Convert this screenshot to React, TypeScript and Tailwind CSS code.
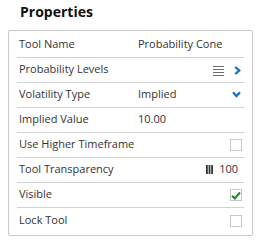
import React from "react";

const font = { fontFamily: "'Open Sans', 'Liberation Sans', sans-serif" };

function Label({ children }: { children: React.ReactNode }) {
  return <span className="w-[119px] shrink-0 pb-[3px] text-[11px] leading-[15px] text-[#333333] whitespace-nowrap">{children}</span>;
}

function Value({ children }: { children: React.ReactNode }) {
  return <span className="pb-[3px] text-[11px] leading-[15px] text-[#333333] whitespace-nowrap">{children}</span>;
}

function Row({ children, last }: { children: React.ReactNode; last?: boolean }) {
  return (
    <div className={`flex items-center h-[25px] pl-[2px] pr-[2px] ${last ? "" : "border-b border-[#d2d2d2]"}`}>
      {children}
    </div>
  );
}

function Checkbox({ checked }: { checked?: boolean }) {
  return (
    <span className="ml-auto flex items-center justify-center w-[12px] h-[12px] border border-[#c8c8c8] bg-white">
      {checked && (
        <svg width="10" height="9" viewBox="0 0 10 9">
          <path d="M1 4.8 L3.8 7.4 L9 1.6" fill="none" stroke="#218a21" strokeWidth="2.2" strokeLinejoin="miter" />
        </svg>
      )}
    </span>
  );
}

export default function App() {
  return (
    <div className="w-[261px] h-[243px] bg-white overflow-hidden" style={font}>
      <div className="pt-[2px] pl-[20px] text-[14px] leading-[19px] font-bold text-[#111111]">Properties</div>
      <div className="mt-[9px] ml-[8px] w-[245px] border border-[#c8c8c8] rounded-[2px] px-[8px] pt-[2px] pb-[2px]">
        <Row>
          <Label>Tool Name</Label>
          <Value>Probability Cone</Value>
        </Row>
        <Row>
          <Label>Probability Levels</Label>
          <span className="ml-auto flex items-center gap-[10px]">
            <svg width="11" height="10" viewBox="0 0 11 10" className="mt-[1px]">
              <rect x="0" y="0" width="11" height="1" fill="#6b6b6b" />
              <rect x="0" y="3" width="11" height="1" fill="#6b6b6b" />
              <rect x="0" y="6" width="11" height="1" fill="#6b6b6b" />
              <rect x="0" y="9" width="11" height="1" fill="#6b6b6b" />
            </svg>
            <svg width="7" height="9" viewBox="0 0 7 9" className="mr-[1px]">
              <path d="M1.2 1 L5.2 4.5 L1.2 8" fill="none" stroke="#1a6fc4" strokeWidth="2.3" />
            </svg>
          </span>
        </Row>
        <Row>
          <Label>Volatility Type</Label>
          <Value>Implied</Value>
          <svg width="9" height="7" viewBox="0 0 9 7" className="ml-auto mr-[1px] -mt-[2px]">
            <path d="M1 1.3 L4.5 5 L8 1.3" fill="none" stroke="#1a6fc4" strokeWidth="2.3" />
          </svg>
        </Row>
        <Row>
          <Label>Implied Value</Label>
          <Value>10.00</Value>
        </Row>
        <Row>
          <Label>Use Higher Timeframe</Label>
          <Checkbox />
        </Row>
        <Row>
          <Label>Tool Transparency</Label>
          <span className="ml-auto flex items-center gap-[6px]">
            <svg width="7" height="9" viewBox="0 0 7 9" className="-mt-[2px]">
              <rect x="0" y="0" width="1.8" height="9" fill="#333333" />
              <rect x="2.6" y="0" width="1.8" height="9" fill="#333333" />
              <rect x="5.2" y="0" width="1.8" height="9" fill="#333333" />
            </svg>
            <span className="pb-[3px] pr-[4px] text-[11px] leading-[15px] text-[#333333]">100</span>
          </span>
        </Row>
        <Row>
          <Label>Visible</Label>
          <Checkbox checked />
        </Row>
        <Row last>
          <Label>Lock Tool</Label>
          <Checkbox />
        </Row>
      </div>
    </div>
  );
}
